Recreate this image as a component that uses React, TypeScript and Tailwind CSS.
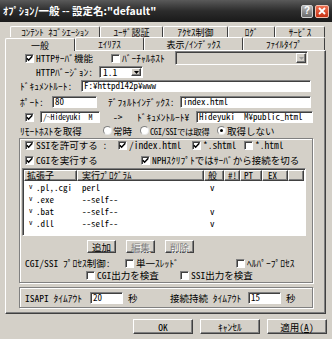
import React from "react";

const face = "bg-[#d4d0c8]";
const sunken =
  "border border-t-[#808080] border-l-[#808080] border-r-white border-b-white shadow-[inset_1px_1px_0_#404040]";
const raised =
  "border border-t-white border-l-white border-r-[#404040] border-b-[#404040] shadow-[inset_-1px_-1px_0_#808080]";

function Check({ on = false, label, w = "" }: { on?: boolean; label?: React.ReactNode; w?: string }) {
  return (
    <div className={"flex items-center shrink-0 " + w}>
      <span className={"w-[9px] h-[9px] shrink-0 bg-white flex items-center justify-center " + sunken}>
        {on && (
          <svg width="7" height="7" viewBox="0 0 7 7">
            <path d="M0.8 3.3 L2.6 5.2 L6.3 1.2" stroke="black" strokeWidth="1.5" fill="none" />
          </svg>
        )}
      </span>
      {label && <span className="ml-[2px] whitespace-nowrap">{label}</span>}
    </div>
  );
}

function Radio({ on = false, label, w = "", text = "" }: { on?: boolean; label: string; w?: string; text?: string }) {
  return (
    <div className={"flex items-center shrink-0 " + w}>
      <span className="w-[9px] h-[9px] shrink-0 rounded-full bg-white border border-t-[#808080] border-l-[#808080] border-r-[#e8e8e8] border-b-[#e8e8e8] flex items-center justify-center">
        {on && <span className="w-[3px] h-[3px] rounded-full bg-black" />}
      </span>
      <span className={"ml-[1px] whitespace-nowrap " + text}>{label}</span>
    </div>
  );
}

function Field({ value, w, text = "text-[9px]" }: { value: string; w: string; text?: string }) {
  return (
    <div
      className={
        "h-full shrink-0 bg-white pl-[2px] flex items-center whitespace-pre overflow-hidden " + text + " " + w + " " + sunken
      }
    >
      {value}
    </div>
  );
}

function Combo({ value = "", w, disabled = false }: { value?: string; w: string; disabled?: boolean }) {
  return (
    <div className={"h-full shrink-0 flex p-[1px] " + w + " " + sunken + " " + (disabled ? face : "bg-white")}>
      <span className="flex-1 pl-[2px] flex items-center">{value}</span>
      <span className={"w-[10px] flex items-center justify-center " + face + " " + raised}>
        <svg width="5" height="3" viewBox="0 0 5 3">
          <path d="M0 0H5L2.5 3Z" fill={disabled ? "#a0a0a0" : "black"} />
        </svg>
      </span>
    </div>
  );
}

function Btn({ label, w, disabled = false, h = "h-[13px]" }: { label: React.ReactNode; w: string; disabled?: boolean; h?: string }) {
  return (
    <div
      className={
        "shrink-0 flex items-center justify-center " + w + " " + h + " " + face + " " + raised + " " +
        (disabled ? "text-[#808080] [text-shadow:1px_1px_0_white]" : "")
      }
    >
      {label}
    </div>
  );
}

const backTabs = [
  { t: "ｺﾝﾃﾝﾄ ﾈｺﾞｼｴｰｼｮﾝ", w: "w-[90px]" },
  { t: "ﾕｰｻﾞ認証", w: "w-[63px]" },
  { t: "ｱｸｾｽ制御", w: "w-[65px]" },
  { t: "ﾛｸﾞ", w: "w-[47px]" },
  { t: "ｻｰﾋﾞｽ", w: "w-[50px]" },
];

const frontTabs = [
  { t: "表示/ｲﾝﾃﾞｯｸｽ", w: "w-[99px]" },
  { t: "ﾌｧｲﾙﾀｲﾌﾟ", w: "w-[82px]" },
];

const rows = [
  { ext: ".pl,.cgi", prog: "perl", v: true },
  { ext: ".exe", prog: "--self--", v: false },
  { ext: ".bat", prog: "--self--", v: true },
  { ext: ".dll", prog: "--self--", v: true },
];

const tabCls =
  "h-full flex items-center justify-center whitespace-nowrap leading-[9px] border-t border-l border-t-white border-l-white border-r border-r-[#404040] rounded-t-[2px] " +
  face;

const headCell = "flex items-center leading-[8px] " + raised;

export default function App() {
  return (
    <div
      className={
        "w-[332px] h-[339px] overflow-hidden text-black text-[9.5px] leading-[10px] font-['Noto_Sans_Mono_CJK_JP','Noto_Sans_CJK_JP',sans-serif] " +
        face
      }
    >
      {/* title bar */}
      <div className="h-[22px] flex items-center pl-[3px] pr-[3px] bg-gradient-to-b from-[#5a5a5a] via-[#2c2c2c] to-[#1a1a1a]">
        <span className="text-white font-bold text-[10.5px] font-['Noto_Sans_CJK_JP',sans-serif] whitespace-nowrap">
          ｵﾌﾟｼｮﾝ/一般 -- 設定名:"default"
        </span>
        <div className="ml-auto flex items-center gap-[2px]">
          <div className="w-[12px] h-[13px] rounded-[2px] bg-gradient-to-b from-[#b8b8b8] to-[#6a6a6a] border border-[#d0d0d0] flex items-center justify-center text-white font-bold text-[10px] font-['Liberation_Sans',sans-serif]">
            ?
          </div>
          <div className="w-[14px] h-[13px] rounded-[2px] bg-gradient-to-b from-[#f07050] to-[#c83010] border border-[#f0c0b0] flex items-center justify-center">
            <svg width="8" height="8" viewBox="0 0 8 8">
              <path d="M1 1L7 7M7 1L1 7" stroke="white" strokeWidth="1.8" />
            </svg>
          </div>
        </div>
      </div>

      {/* tabs */}
      <div className="flex h-[11px] mt-[4px] ml-[10px] text-[9px]">
        {backTabs.map((b) => (
          <div key={b.t} className={tabCls + " " + b.w}>
            {b.t}
          </div>
        ))}
      </div>
      <div className="flex items-end h-[13px] ml-[5px] text-[9px]">
        <div className={"relative z-10 h-[14px] -mb-[1px] w-[70px] " + tabCls}>一般</div>
        <div className={tabCls + " w-[69px]"}>ｴｲﾘｱｽ</div>
        {frontTabs.map((b) => (
          <div key={b.t} className={tabCls + " " + b.w}>
            {b.t}
          </div>
        ))}
      </div>

      {/* panel */}
      <div className={"ml-[5px] w-[321px] h-[264px] flex flex-col " + raised}>
        <div className="flex items-center h-[14px] pl-[19px]">
          <Check on label="HTTPｻｰﾊﾞ機能" w="w-[86px]" />
          <Check label="ﾊﾞｰﾁｬﾙﾎｽﾄ" w="w-[64px]" />
          <Combo w="w-[133px]" disabled />
        </div>
        <div className="flex items-center h-[12px] mt-[1px] pl-[30px]">
          <span className="w-[63px] shrink-0">HTTPﾊﾞｰｼﾞｮﾝ:</span>
          <Combo value="1.1" w="w-[44px]" />
        </div>
        <div className="flex items-center h-[12px] mt-[2px] pl-[14px]">
          <span className="w-[61px] shrink-0">ﾄﾞｷｭﾒﾝﾄﾙｰﾄ:</span>
          <Field value="F:¥httpd142p¥www" w="w-[230px]" />
        </div>
        <div className="flex items-center h-[12px] mt-[4px] pl-[14px]">
          <span className="w-[32px] shrink-0">ﾎﾟｰﾄ:</span>
          <Field value="80" w="w-[45px]" />
          <span className="w-[72px] shrink-0 ml-[11px]">ﾃﾞﾌｫﾙﾄｲﾝﾃﾞｯｸｽ:</span>
          <Field value="index.html" w="w-[131px]" />
        </div>
        <div className="flex items-center h-[12px] mt-[3px] pl-[19px]">
          <Check on w="w-[15px]" />
          <Field value="/~Hideyuki  M" w="w-[60px]" text="text-[8px] tracking-[-0.2px]" />
          <span className="w-[24px] shrink-0 ml-[13px]">-&gt;</span>
          <span className="w-[59px] shrink-0">ﾄﾞｷｭﾒﾝﾄﾙｰﾄ¥</span>
          <Field value="Hideyuki  M¥public_html" w="w-[117px]" />
        </div>
        <div className="flex items-center h-[11px] mt-[2px] pl-[14px]">
          <span className="w-[83px] shrink-0">ﾘﾓｰﾄﾎｽﾄを取得</span>
          <Radio label="常時" w="w-[37px]" />
          <Radio label="CGI/SSIでは取得" w="w-[77px]" text="text-[8.5px] tracking-[-0.4px]" />
          <Radio on label="取得しない" />
        </div>

        {/* SSI / CGI group */}
        <div className="ml-[13px] mt-[2px] w-[294px] h-[145px] shrink-0 flex flex-col border border-[#808080] shadow-[inset_1px_1px_0_white,1px_1px_0_white]">
          <div className="flex items-center h-[10px] mt-[1px] pl-[5px]">
            <Check on label="SSIを許可する :" w="w-[93px]" />
            <Check on label="/index.html" w="w-[74px]" />
            <Check on label="*.shtml" w="w-[52px]" />
            <Check label="*.html" />
          </div>
          <div className="flex items-center h-[10px] mt-[5px] pl-[5px]">
            <Check on label="CGIを実行する" w="w-[116px]" />
            <Check on label="NPHｽｸﾘﾌﾟﾄではｻｰﾊﾞから接続を切る" />
          </div>
          <div className={"ml-[2px] mt-[3px] w-[284px] h-[68px] shrink-0 bg-white p-[1px] flex flex-col overflow-hidden " + sunken}>
            <div className={"flex h-[11px] shrink-0 text-[9px] " + face}>
              <div className={"w-[53px] pl-[2px] " + headCell}>拡張子</div>
              <div className={"w-[127px] pl-[4px] " + headCell}>実行ﾌﾟﾛｸﾞﾗﾑ</div>
              <div className={"w-[20px] pl-[3px] " + headCell}>般</div>
              <div className={"w-[16px] pl-[3px] " + headCell}>#!</div>
              <div className={"w-[22px] pl-[3px] " + headCell}>PT</div>
              <div className={"w-[26px] pl-[5px] " + headCell}>EX</div>
              <div className={"flex-1 " + raised} />
            </div>
            {rows.map((r) => (
              <div key={r.ext} className="flex items-center h-[12px] shrink-0 text-[9px] leading-[9px]">
                <div className="w-[53px] pl-[5px] flex items-center">
                  <span className="text-[7px] leading-[7px] w-[7px] self-start">v</span>
                  <span>{r.ext}</span>
                </div>
                <div className="w-[127px] pl-[5px]">{r.prog}</div>
                <div className="w-[20px] pl-[6px]">{r.v ? "v" : ""}</div>
              </div>
            ))}
          </div>
          <div className="flex items-center gap-[10px] mt-[4px] ml-[67px]">
            <Btn label="追加" w="w-[29px]" />
            <Btn label="編集" w="w-[29px]" disabled />
            <Btn label="削除" w="w-[29px]" disabled />
          </div>
          <div className="flex items-center h-[10px] mt-[5px] pl-[5px]">
            <span className="w-[100px] shrink-0 whitespace-nowrap">CGI/SSI ﾌﾟﾛｾｽ制御:</span>
            <Check label="単一ｽﾚｯﾄﾞ" w="w-[111px]" />
            <Check label="ﾍﾙﾊﾟｰﾌﾟﾛｾｽ" />
          </div>
          <div className="flex items-center h-[10px] mt-[2px] pl-[66px]">
            <Check label="CGI出力を検査" w="w-[94px]" />
            <Check label="SSI出力を検査" />
          </div>
        </div>

        {/* timeout group */}
        <div className="ml-[13px] mt-[4px] w-[294px] h-[21px] shrink-0 flex items-center pl-[5px] border border-[#808080] shadow-[inset_1px_1px_0_white,1px_1px_0_white]">
          <span className="w-[65px] shrink-0 whitespace-nowrap">ISAPI ﾀｲﾑｱｳﾄ</span>
          <div className="h-[12px] flex">
            <Field value="20" w="w-[33px]" />
          </div>
          <span className="w-[47px] shrink-0 pl-[5px]">秒</span>
          <span className="w-[78px] shrink-0 whitespace-nowrap">接続持続 ﾀｲﾑｱｳﾄ</span>
          <div className="h-[12px] flex">
            <Field value="15" w="w-[33px]" />
          </div>
          <span className="pl-[5px]">秒</span>
        </div>
      </div>

      {/* dialog buttons */}
      <div className="flex gap-[7px] mt-[5px] ml-[133px]">
        <Btn label="OK" w="w-[60px]" h="h-[15px]" />
        <Btn label="ｷｬﾝｾﾙ" w="w-[60px]" h="h-[15px]" />
        <Btn
          label={
            <span>
              適用(<span className="underline">A</span>)
            </span>
          }
          w="w-[60px]"
          h="h-[15px]"
        />
      </div>
    </div>
  );
}
